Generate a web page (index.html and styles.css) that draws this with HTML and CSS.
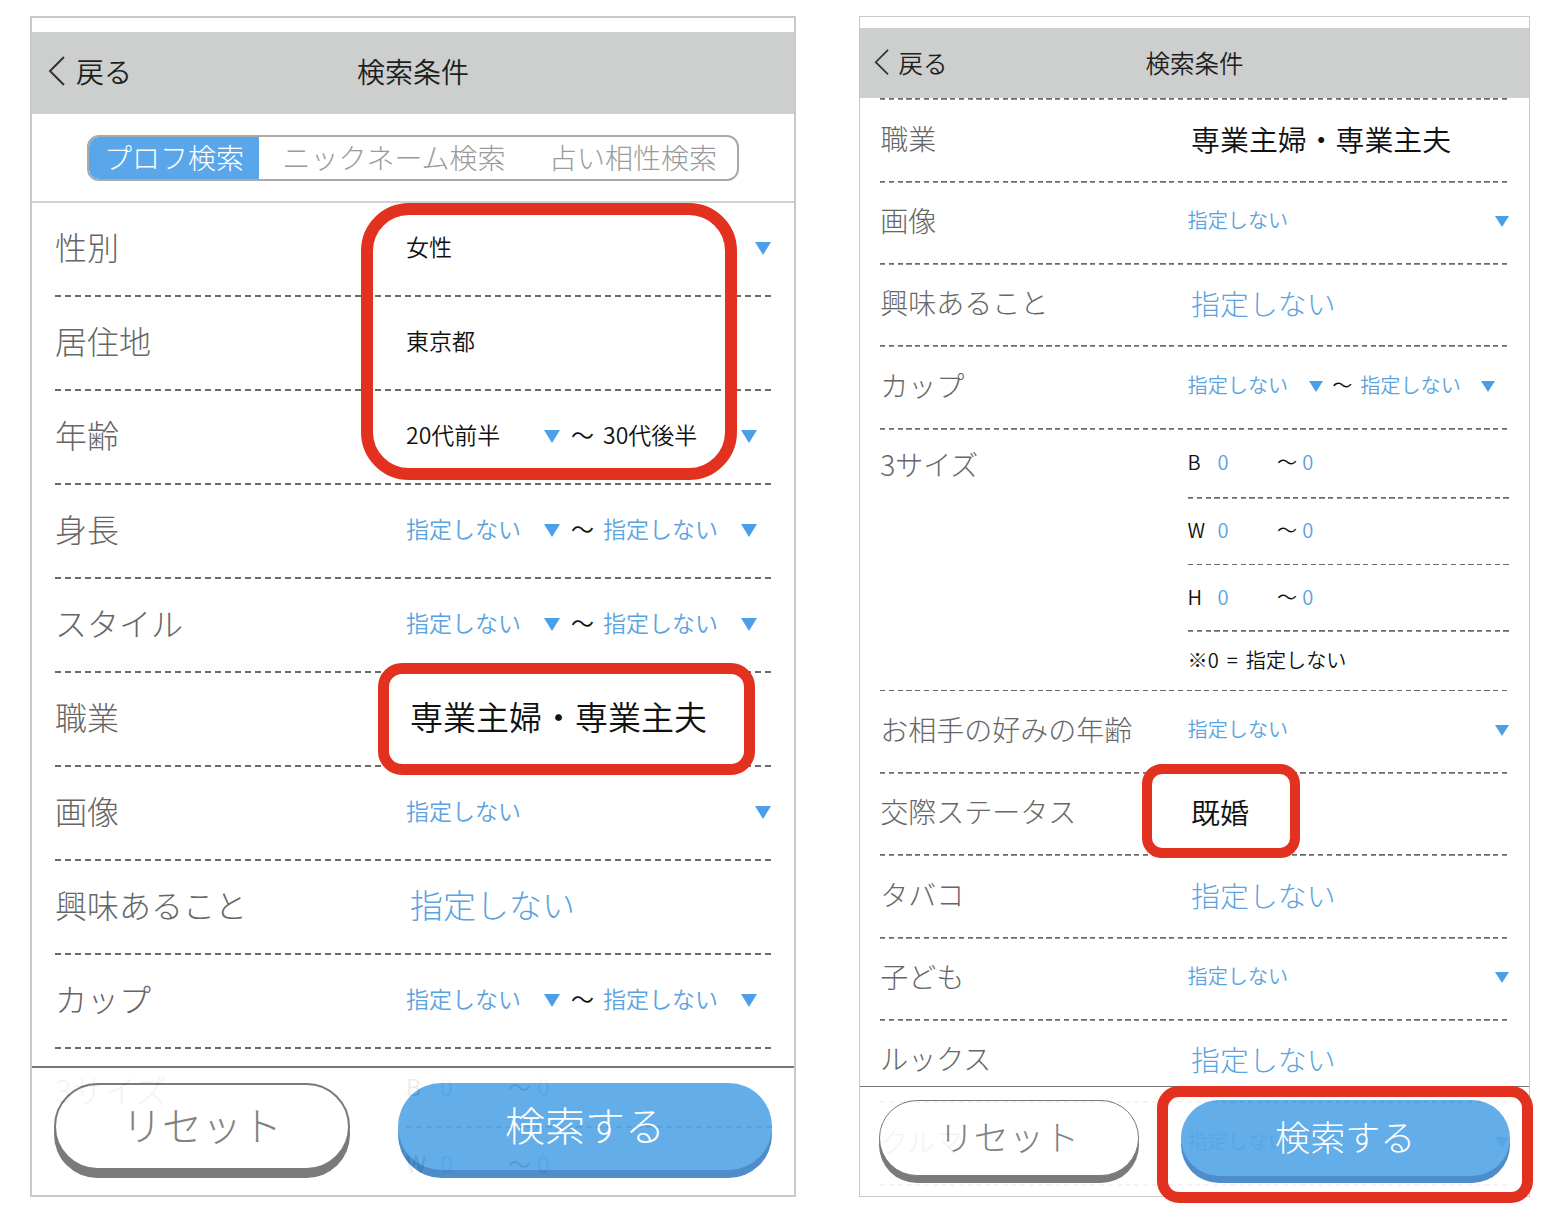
FILE: index.html
```html
<!DOCTYPE html>
<html lang="ja">
<head>
<meta charset="utf-8">
<title>検索条件</title>
<link rel="stylesheet" href="styles.css">
</head>
<body>
<div class="canvas">

  <section class="phone phone-a">
    <div class="status"></div>
    <header class="nav">
      <span class="back"><svg viewBox="0 0 18 30" aria-hidden="true"><path d="M16 1 L2 15 L16 29"/></svg>戻る</span>
      <h1 class="nav-title">検索条件</h1>
      <span></span>
    </header>
    <div class="tabs-wrap">
      <div class="tabs">
        <span class="tab is-active">プロフ検索</span>
        <span class="tab">ニックネーム検索</span>
        <span class="tab">占い相性検索</span>
      </div>
    </div>
    <div class="list">
      <div class="row"><span class="label">性別</span><div class="select"><span class="val val-dark">女性</span><i class="caret"></i></div></div>
      <div class="row"><span class="label">居住地</span><div class="select"><span class="val val-dark">東京都</span></div></div>
      <div class="row"><span class="label">年齢</span><div class="range"><div class="select"><span class="val val-dark">20代前半</span><i class="caret"></i></div><span class="tilde">〜</span><div class="select"><span class="val val-dark">30代後半</span><i class="caret"></i></div></div></div>
      <div class="row"><span class="label">身長</span><div class="range"><div class="select"><span class="val">指定しない</span><i class="caret"></i></div><span class="tilde">〜</span><div class="select"><span class="val">指定しない</span><i class="caret"></i></div></div></div>
      <div class="row"><span class="label">スタイル</span><div class="range"><div class="select"><span class="val">指定しない</span><i class="caret"></i></div><span class="tilde">〜</span><div class="select"><span class="val">指定しない</span><i class="caret"></i></div></div></div>
      <div class="row"><span class="label">職業</span><span class="val val-lg val-dark">専業主婦・専業主夫</span></div>
      <div class="row"><span class="label">画像</span><div class="select"><span class="val">指定しない</span><i class="caret"></i></div></div>
      <div class="row"><span class="label">興味あること</span><span class="val val-lg">指定しない</span></div>
      <div class="row"><span class="label">カップ</span><div class="range"><div class="select"><span class="val">指定しない</span><i class="caret"></i></div><span class="tilde">〜</span><div class="select"><span class="val">指定しない</span><i class="caret"></i></div></div></div>
      <div class="row row-sizes"><span class="label">3サイズ</span>
        <div class="sizes">
          <div class="size-line"><span class="size-key">B</span><span class="size-num">0</span><span class="size-tilde">〜</span><span class="size-num">0</span></div>
          <div class="size-line"><span class="size-key">W</span><span class="size-num">0</span><span class="size-tilde">〜</span><span class="size-num">0</span></div>
        </div>
      </div>
    </div>
    <div class="actions">
      <button class="btn btn-reset" type="button">リセット</button>
      <button class="btn btn-search" type="button">検索する</button>
    </div>
  </section>

  <section class="phone phone-b">
    <div class="status"></div>
    <header class="nav">
      <span class="back"><svg viewBox="0 0 18 30" aria-hidden="true"><path d="M16 1 L2 15 L16 29"/></svg>戻る</span>
      <h1 class="nav-title">検索条件</h1>
      <span></span>
    </header>
    <div class="list list-scrolled">
      <div class="row"><span class="label">職業</span><span class="val val-lg val-dark">専業主婦・専業主夫</span></div>
      <div class="row"><span class="label">画像</span><div class="select"><span class="val">指定しない</span><i class="caret"></i></div></div>
      <div class="row"><span class="label">興味あること</span><span class="val val-lg">指定しない</span></div>
      <div class="row"><span class="label">カップ</span><div class="range"><div class="select"><span class="val">指定しない</span><i class="caret"></i></div><span class="tilde">〜</span><div class="select"><span class="val">指定しない</span><i class="caret"></i></div></div></div>
      <div class="row row-sizes"><span class="label">3サイズ</span>
        <div class="sizes">
          <div class="size-line"><span class="size-key">B</span><span class="size-num">0</span><span class="size-tilde">〜</span><span class="size-num">0</span></div>
          <div class="size-line"><span class="size-key">W</span><span class="size-num">0</span><span class="size-tilde">〜</span><span class="size-num">0</span></div>
          <div class="size-line"><span class="size-key">H</span><span class="size-num">0</span><span class="size-tilde">〜</span><span class="size-num">0</span></div>
          <div class="size-note">※0 = 指定しない</div>
        </div>
      </div>
      <div class="row"><span class="label">お相手の好みの年齢</span><div class="select"><span class="val">指定しない</span><i class="caret"></i></div></div>
      <div class="row"><span class="label">交際ステータス</span><span class="val val-lg val-dark">既婚</span></div>
      <div class="row"><span class="label">タバコ</span><span class="val val-lg">指定しない</span></div>
      <div class="row"><span class="label">子ども</span><div class="select"><span class="val">指定しない</span><i class="caret"></i></div></div>
      <div class="row"><span class="label">ルックス</span><span class="val val-lg">指定しない</span></div>
      <div class="row"><span class="label">クルマ</span><div class="select"><span class="val">指定しない</span><i class="caret"></i></div></div>
    </div>
    <div class="actions">
      <button class="btn btn-reset" type="button">リセット</button>
      <button class="btn btn-search" type="button">検索する</button>
    </div>
  </section>

  <div class="mark mark-profile"></div>
  <div class="mark mark-job"></div>
  <div class="mark mark-status"></div>
  <div class="mark mark-search"></div>
</div>
</body>
</html>
```

FILE: styles.css
```css
* {
  box-sizing: border-box;
  margin: 0;
  padding: 0;
}

body {
  margin: 0;
  background: #fff;
  font-family: "Noto Sans CJK JP", "Noto Sans", "Liberation Sans", sans-serif;
  font-weight: 300;
  color: #222;
}

.canvas {
  position: relative;
  width: 1562px;
  height: 1222px;
  display: flex;
  align-items: flex-start;
  gap: 63px;
  padding: 16px 0 0 30px;
}

/* phone frame */
.phone {
  position: relative;
  flex: none;
  width: 766px;
  height: 1181px;
  border: 2px solid #c9c9c9;
  background: #fff;
  overflow: hidden;
  display: flex;
  flex-direction: column;
}

.phone-b {
  zoom: 0.876;
  height: 1348px;
}

.status {
  flex: none;
  height: 14px;
}

.phone-b .status {
  height: 13px;
}

/* navigation bar */
.nav {
  flex: none;
  height: 82px;
  background: #cccfce;
  display: grid;
  grid-template-columns: 1fr auto 1fr;
  align-items: center;
  padding: 0 16px 4px;
  font-size: 28px;
  font-weight: 350;
  color: #1e1e1e;
}

.phone-b .nav {
  height: 80px;
  padding-bottom: 2px;
}

.back {
  display: flex;
  align-items: center;
  gap: 10px;
  line-height: 40px;
}

.back svg {
  width: 18px;
  height: 30px;
  fill: none;
  stroke: #333;
  stroke-width: 2;
}

.nav-title {
  font-size: 28px;
  font-weight: 350;
  line-height: 40px;
}

/* segmented tabs */
.tabs-wrap {
  flex: none;
  height: 89px;
  padding-top: 21px;
  display: flex;
  justify-content: center;
  border-bottom: 2px solid #d2d2d2;
}

.tabs {
  display: grid;
  grid-template-columns: 170px 270px 208px;
  height: 46px;
  border: 2px solid #a9a9a9;
  border-radius: 12px;
  overflow: hidden;
}

.tab {
  font-size: 28px;
  line-height: 40px;
  text-align: center;
  color: #9b9b9b;
  white-space: nowrap;
}

.tab.is-active {
  background: #5aa6ea;
  color: #fff;
}

/* list rows */
.list {
  flex: none;
}

.list-scrolled {
  padding-top: 2px;
  background: repeating-linear-gradient(90deg, #6a6a6a 0 6px, transparent 6px 10px) 23px 0 / 717px 2px no-repeat;
}

.row {
  height: 94px;
  margin: 0 22px 0 23px;
  padding-bottom: 8px;
  display: grid;
  grid-template-columns: 351px 1fr;
  align-items: center;
  background: repeating-linear-gradient(90deg, #6a6a6a 0 6px, transparent 6px 10px) left bottom / 100% 2px no-repeat;
}

.label {
  font-size: 32px;
  line-height: 46px;
  color: #666;
  white-space: nowrap;
}

.val {
  font-size: 23px;
  line-height: 34px;
  font-weight: 350;
  color: #5ba3e0;
  white-space: nowrap;
}

.val-lg {
  font-size: 33px;
  line-height: 46px;
  font-weight: 300;
  padding-left: 4px;
}

.val-dark {
  color: #111;
  font-weight: 350;
}

.select {
  display: flex;
  align-items: center;
  justify-content: space-between;
  padding-right: 1px;
}

.caret {
  display: block;
  width: 0;
  height: 0;
  margin-top: 4px;
  border-left: 8.5px solid transparent;
  border-right: 8.5px solid transparent;
  border-top: 13px solid #4b9fe8;
}

.range {
  display: flex;
  align-items: center;
}

.range .select {
  width: 156px;
  padding-right: 2px;
}

.tilde {
  width: 41px;
  text-align: center;
  font-size: 23px;
  font-weight: 350;
  color: #111;
}

/* 3 sizes block */
.row-sizes {
  height: auto;
  align-items: start;
  padding-bottom: 2px;
}

.row-sizes .label {
  padding-top: 17px;
}

.size-line {
  height: 76px;
  padding-bottom: 6px;
  display: flex;
  align-items: center;
  font-size: 23px;
  background: repeating-linear-gradient(90deg, #6a6a6a 0 6px, transparent 6px 10px) left bottom / 100% 2px no-repeat;
}

.size-line:first-child {
  height: 79px;
}

.size-key {
  width: 34px;
  font-weight: 350;
  color: #111;
}

.size-num {
  width: 68px;
  font-weight: 350;
  color: #5ba3e0;
}

.size-tilde {
  width: 29px;
  font-weight: 350;
  color: #111;
}

.size-note {
  height: 66px;
  padding-bottom: 4px;
  display: flex;
  align-items: center;
  font-size: 23px;
  font-weight: 350;
  color: #111;
  word-spacing: 4px;
}

/* bottom action bar (floats over the scrolling list) */
.actions {
  position: absolute;
  left: 0;
  right: 0;
  bottom: 0;
  height: 129px;
  padding: 15px 22px 0 22px;
  display: flex;
  gap: 48px;
  background: #fff;
  border-top: 2px solid #6b6b6b;
  opacity: 0.92;
}

.phone-b .actions {
  height: 125px;
  padding-top: 14px;
}

.btn {
  height: 87px;
  padding-bottom: 6px;
  border-radius: 44px;
  font-family: inherit;
  font-weight: 300;
  font-size: 40px;
  line-height: 1;
  cursor: pointer;
}

.btn-reset {
  flex: none;
  width: 296px;
  background: #fff;
  color: #777;
  border: 2px solid #6f6f6f;
  box-shadow: 0 8px 0 #6f6f6f;
}

.btn-search {
  flex: 1;
  background: #56a7e7;
  color: #fff;
  border: none;
  box-shadow: 0 8px 0 #3f83c6;
}

/* red annotation frames */
.mark {
  position: absolute;
  border: 11px solid #e2321f;
  pointer-events: none;
}

.mark-profile {
  left: 361px;
  top: 203px;
  width: 376px;
  height: 277px;
  border-width: 12px;
  border-radius: 48px;
}

.mark-job {
  left: 378px;
  top: 663px;
  width: 377px;
  height: 112px;
  border-radius: 24px;
}

.mark-status {
  left: 1142px;
  top: 764px;
  width: 158px;
  height: 94px;
  border-width: 10px;
  border-radius: 20px;
}

.mark-search {
  left: 1157px;
  top: 1086px;
  width: 376px;
  height: 117px;
  border-radius: 22px;
}
```
